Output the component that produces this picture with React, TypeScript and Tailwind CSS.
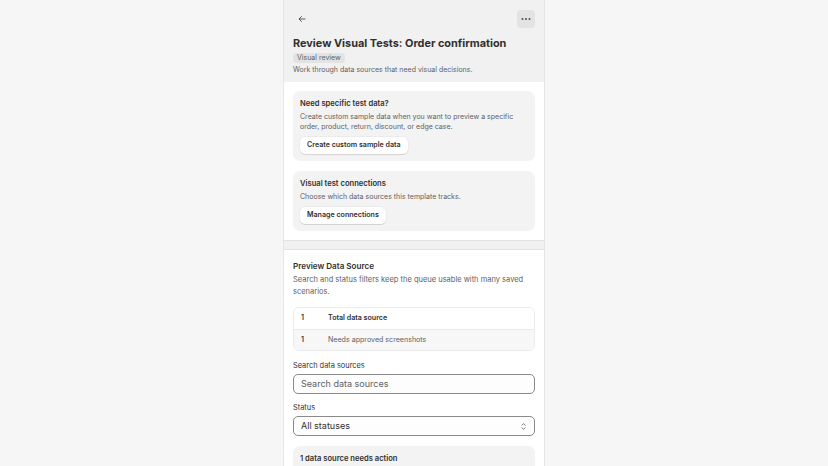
import React, { FC } from "react";

const font = { fontFamily: "Inter, 'Noto Sans', sans-serif" };

// Small helpers
const SecondaryButton: FC<{ label: string }> = ({ label }) => (
  <button className="h-[17px] rounded-[5px] bg-white px-[7px] text-[7.1px] font-semibold text-[#303030] shadow-[0_1px_0_0_#d4d4d4,0_0_0_0.5px_#e3e3e3]">
    {label}
  </button>
);

const InfoCard: FC<{ title: string; text: string; action: string }> = ({
  title,
  text,
  action,
}) => (
  <div className="rounded-[7px] bg-[#f3f3f3] px-[7px] pb-[7px] pt-[8px]">
    <h3 className="text-[7.6px] font-semibold leading-[10px] text-[#303030]">{title}</h3>
    <p className="mt-[3px] text-[7px] leading-[10px] text-[#616161]">{text}</p>
    <div className="mt-[5px] flex">
      <SecondaryButton label={action} />
    </div>
  </div>
);

const App: FC = () => {
  return (
    <div className="min-h-screen w-full bg-[#f6f6f6]" style={font}>
      <div className="mx-auto flex w-[262px] flex-col border-x border-[#e6e6e6]">
        {/* Header */}
        <div className="bg-[#f1f1f1] px-[9px] pb-[7px] pt-[10px]">
          <div className="flex items-center justify-between">
            <button className="flex h-[18px] w-[18px] items-center justify-center text-[#4a4a4a]">
              <svg width="10" height="10" viewBox="0 0 20 20" fill="none">
                <path
                  d="M16 10H4.5M9 5l-5 5 5 5"
                  stroke="currentColor"
                  strokeWidth="1.8"
                  strokeLinecap="round"
                  strokeLinejoin="round"
                />
              </svg>
            </button>
            <button className="flex h-[18px] w-[18px] items-center justify-center rounded-[4px] bg-[#e3e3e3]">
              <svg width="10" height="4" viewBox="0 0 10 4">
                <circle cx="1.5" cy="2" r="1" fill="#4a4a4a" />
                <circle cx="5" cy="2" r="1" fill="#4a4a4a" />
                <circle cx="8.5" cy="2" r="1" fill="#4a4a4a" />
              </svg>
            </button>
          </div>
          <h1 className="mt-[8px] text-[10.9px] font-bold leading-[14px] text-[#303030]">
            Review Visual Tests: Order confirmation
          </h1>
          <div className="mt-[3px] flex">
            <span className="rounded-[4px] bg-[#e3e3e3] px-[4px] text-[7px] leading-[10px] text-[#616161]">
              Visual review
            </span>
          </div>
          <p className="mt-[2px] text-[7px] leading-[10px] text-[#616161]">
            Work through data sources that need visual decisions.
          </p>
        </div>

        {/* Helper cards */}
        <div className="flex flex-col gap-[10px] border-b border-[#e3e3e3] bg-white px-[9px] pb-[9px] pt-[9px]">
          <InfoCard
            title="Need specific test data?"
            text="Create custom sample data when you want to preview a specific order, product, return, discount, or edge case."
            action="Create custom sample data"
          />
          <InfoCard
            title="Visual test connections"
            text="Choose which data sources this template tracks."
            action="Manage connections"
          />
        </div>

        <div className="h-[8px] bg-[#f1f1f1]" />

        {/* Preview data source */}
        <div className="border-t border-[#e3e3e3] bg-white px-[9px] pb-[10px] pt-[10px]">
          <h2 className="text-[8.1px] font-semibold leading-[12px] text-[#303030]">
            Preview Data Source
          </h2>
          <p className="mt-[2px] text-[7.5px] leading-[12px] text-[#616161]">
            Search and status filters keep the queue usable with many saved scenarios.
          </p>

          <div className="mt-[9px] overflow-hidden rounded-[6px] border border-[#ebebeb]">
            <div className="flex h-[21px] items-center bg-white px-[7px] text-[7.1px]">
              <span className="w-[27px] font-semibold text-[#303030]">1</span>
              <span className="font-semibold text-[#303030]">Total data source</span>
            </div>
            <div className="flex h-[21px] items-center border-t border-[#ebebeb] bg-[#f7f7f7] px-[7px] text-[7.1px]">
              <span className="w-[27px] font-semibold text-[#303030]">1</span>
              <span className="text-[#616161]">Needs approved screenshots</span>
            </div>
          </div>

          <label className="mt-[9px] block text-[7.4px] leading-[11px] text-[#303030]">
            Search data sources
          </label>
          <div className="mt-[3px] flex h-[20px] items-center rounded-[5px] border border-[#8a8a8a] bg-[#fdfdfd] px-[7px]">
            <span className="text-[9px] text-[#616161]">Search data sources</span>
          </div>

          <label className="mt-[8px] block text-[7.4px] leading-[11px] text-[#303030]">
            Status
          </label>
          <div className="mt-[3px] flex h-[20px] items-center justify-between rounded-[5px] border border-[#8a8a8a] bg-[#fdfdfd] px-[7px]">
            <span className="text-[9px] text-[#303030]">All statuses</span>
            <svg width="7" height="9" viewBox="0 0 10 14" fill="none">
              <path
                d="M2.5 5L5 2.5 7.5 5M2.5 9L5 11.5 7.5 9"
                stroke="#616161"
                strokeWidth="1.3"
                strokeLinecap="round"
                strokeLinejoin="round"
              />
            </svg>
          </div>

          <div className="mt-[10px] rounded-[7px] bg-[#f3f3f3] px-[7px] pb-[10px] pt-[8px]">
            <h3 className="text-[7.6px] font-semibold leading-[10px] text-[#303030]">
              1 data source needs action
            </h3>
          </div>
        </div>
      </div>
    </div>
  );
};

export default App;
